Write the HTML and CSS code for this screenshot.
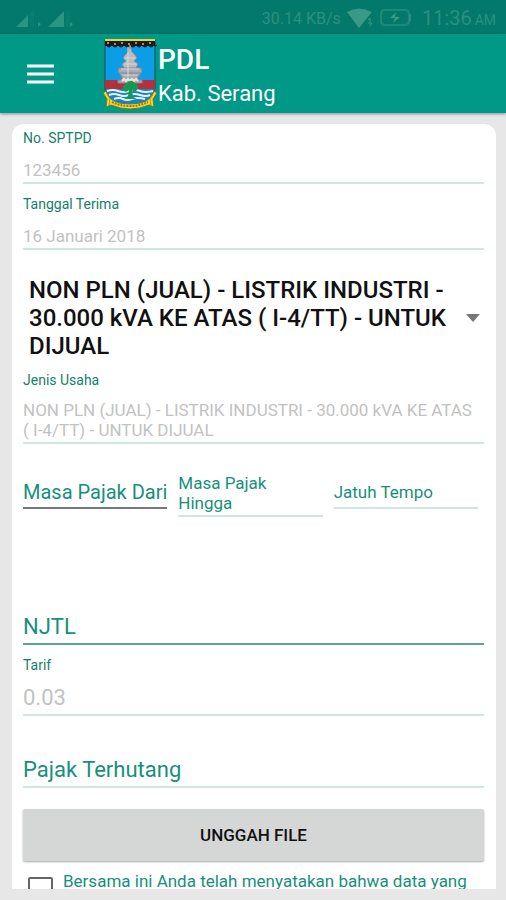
FILE: index.html
```html
<!DOCTYPE html>
<html lang="id">
  <head>
    <meta charset="UTF-8" />
    <meta name="viewport" content="width=device-width, initial-scale=1.0" />
    <title>PDL Kab. Serang</title>
    <link rel="stylesheet" href="styles.css">
  </head>
  <body>
    <div class="status-bar">
      <svg class="signal" width="62" height="22" viewBox="0 0 62 22" aria-hidden="true">
        <path d="M0 18L12 6V18Z M32 18L48 2V18Z" fill="#2b9583" />
        <path d="M14 4L18 1V18H14Z M50 3L54 0V18H50Z" fill="#067d6e" />
        <path d="M22 13l3 2-3 3z M54 13l3 2-3 3z" fill="#2b9583" />
      </svg>
      <div class="status-right">
        <span>30.14 KB/s</span>
        <svg width="27" height="20" viewBox="0 0 27 20" aria-hidden="true">
          <path d="M0 4Q12 -3 25 4L12 20Z" fill="#389986" />
          <path d="M21 12l2-2v4m-2 1h4l-2 3" fill="none" stroke="#389986" />
        </svg>
        <svg class="battery" width="32" height="18" viewBox="0 0 32 18" aria-hidden="true">
          <path d="M5 1H24Q29 1 29 5V12Q29 16 24 16H5Q1 16 1 12V5Q1 1 5 1Z" fill="none" stroke="#1d8a78" stroke-width="2" />
          <path d="M30 5v7" stroke="#268f7d" stroke-width="2" />
          <path d="M16 3L10 9H15L13 14L20 8H15Z" fill="#389986" />
        </svg>
        <span class="clock">11:36 <small>AM</small></span>
      </div>
    </div>

    <header class="app-bar">
      <button type="button" class="menu-button" aria-label="Menu">
        <svg width="27" height="20" viewBox="0 0 27 20">
          <path d="M0 2H27M0 10H27M0 18H27" stroke="#fff" stroke-width="3" />
        </svg>
      </button>
      <svg class="logo" width="56" height="72" viewBox="0 0 56 72" aria-hidden="true">
        <path d="M3 2H53V50Q53 67 28 67Q3 67 3 50Z" fill="#0b9de5" stroke="#254b50" />
        <path d="M3 42H53V51H3Z" fill="#b62f3c" />
        <path d="M4 51H52Q51 66 28 66Q5 66 4 51Z" fill="#1681cf" />
        <path d="M5 53q6-2 11 0t11 0 11 0 13 0M7 57q5-2 10 0t10 0 11 0 10 0M12 61q5-2 9 0t9 0 13 0" fill="none" stroke="#e5f6fa" stroke-width="2" />
        <path d="M3 2H53V8H3Z" fill="#171b19" />
        <path d="M3 2H53" stroke="#ead834" stroke-width="2" />
        <path d="M4 7q3 4 6 0 3 4 6 0 3 4 6 0 3 4 6 0 3 4 6 0 3 4 6 0 3 4 6 0 3 4 6 0 2 2 3 0" fill="#171b19" stroke="#171b19" />
        <path d="M5 5h2m5 1h2m5-1h2m5 1h2m5-1h2m5 1h2m5-1h2" stroke="#eb723f" stroke-width="2" />
        <path d="M28 7L30 14L33 17L35 20L32 23L36 26L34 30L39 34L37 38H19L17 34L22 30L20 26L24 23L21 20L23 17L26 14Z" fill="#b9bbc0" stroke="#8b9098" />
        <path d="M17 30q-2 4 0 5h22q2-1 0-5H17z M20 36h16v6h4v3H16v-3h4z" fill="#a8abb2" stroke="#858a92" />
        <path d="M23 20h10M22 26h12M19 31h18M20 37h16" stroke="#d5d6d9" />
        <path d="M26 9v30" stroke="#d9dadd" />
        <path d="M20 43l2-2 2 2 2-2 2 2 2-2 2 2 2-2 2 2" fill="none" stroke="#eee2db" stroke-width="2" />
        <path d="M22 53q-3-5 2-7 4-6 9-1 5 2 2 7-3 3-5 0l1 7 4 2H23l3-3 1-6q-3 3-5 1z" fill="#16984f" />
        <path d="M4 53Q7 66 28 66T52 53L55 55L51 61L52 69L47 67Q38 71 28 71T9 67L4 69L5 61L1 55Z" fill="#f1d936" stroke="#78771e" />
        <path d="M10 64q8 4 18 4t18-4" fill="none" stroke="#8a8129" stroke-width="2" stroke-dasharray="2 1" />
        <path d="M5 56l3 5-1 6M51 56l-3 5 1 6" fill="none" stroke="#a79825" />
      </svg>
      <div class="app-title">
        <h1>PDL</h1>
        <p>Kab. Serang</p>
      </div>
    </header>

    <main class="page">
      <form class="card">
        <div class="field">
          <label for="no-sptpd">No. SPTPD</label>
          <input type="text" id="no-sptpd" placeholder="123456" />
        </div>
        <div class="field">
          <label for="tanggal-terima">Tanggal Terima</label>
          <input type="text" id="tanggal-terima" placeholder="16 Januari 2018" />
        </div>

        <div class="select-wrap">
          <select aria-label="Pilih jenis usaha">
            <option>NON PLN (JUAL) - LISTRIK INDUSTRI - 30.000 kVA KE ATAS ( I-4/TT) - UNTUK DIJUAL</option>
          </select>
          <svg class="arrow" width="14" height="8" viewBox="0 0 14 8" aria-hidden="true">
            <path d="M0 0H14L7 8Z" fill="#777" />
          </svg>
        </div>

        <div class="field">
          <label for="jenis-usaha">Jenis Usaha</label>
          <textarea id="jenis-usaha" rows="2" placeholder="NON PLN (JUAL) - LISTRIK INDUSTRI - 30.000 kVA KE ATAS (&nbsp;I-4/TT) - UNTUK DIJUAL"></textarea>
        </div>

        <div class="dates">
          <input type="text" class="date-from" aria-label="Masa Pajak Dari" placeholder="Masa Pajak Dari" />
          <textarea rows="2" aria-label="Masa Pajak Hingga" placeholder="Masa Pajak Hingga"></textarea>
          <input type="text" aria-label="Jatuh Tempo" placeholder="Jatuh Tempo" />
        </div>

        <input type="text" class="large njtl" aria-label="NJTL" placeholder="NJTL" />
        <div class="field">
          <label for="tarif">Tarif</label>
          <input type="text" class="large tarif" id="tarif" placeholder="0.03" />
        </div>
        <input type="text" class="large pajak" aria-label="Pajak Terhutang" placeholder="Pajak Terhutang" />

        <button type="button" class="upload">UNGGAH FILE</button>

        <div class="agree">
          <input type="checkbox" id="agree" />
          <label for="agree">Bersama ini Anda telah menyatakan bahwa data yang</label>
        </div>
      </form>
    </main>
  </body>
</html>
```

FILE: styles.css
```css
* {
  box-sizing: border-box;
}
body {
  display: flex;
  flex-direction: column;
  height: 100vh;
  margin: 0;
  overflow: hidden;
  background: #e7e7e7;
  font-family: Roboto, "Liberation Sans", sans-serif;
}
h1,
p {
  margin: 0;
}
button,
input,
select,
textarea {
  font-family: inherit;
}

/* top bars */
.status-bar {
  display: flex;
  flex: none;
  align-items: center;
  justify-content: space-between;
  height: 34px;
  padding: 2px 10px 0 16px;
  background: #03796b;
  color: #2b907f;
  font-size: 16px;
}
.status-right {
  display: flex;
  align-items: center;
  gap: 6px;
}
.signal {
  margin-top: 4px;
}
.clock {
  margin-left: 4px;
  font-size: 20px;
}
.clock small {
  margin-left: -2px;
  font-size: 14px;
}
.app-bar {
  display: flex;
  flex: none;
  align-items: center;
  height: 79px;
  padding-left: 27px;
  background: #009886;
  color: #fff;
  box-shadow: 0 1px 3px rgba(0, 0, 0, 0.4);
}
.menu-button {
  display: flex;
  padding: 0;
  border: none;
  background: none;
  cursor: pointer;
}
.logo {
  margin-left: 48px;
}
.app-title {
  padding-top: 6px;
}
.app-title h1 {
  font-size: 28px;
  font-weight: 500;
  line-height: 34px;
}
.app-title p {
  font-size: 22px;
  line-height: 34px;
}

/* form */
.page {
  flex: 1;
  min-height: 0;
  padding: 11px 10px 11px 12px;
}
.card {
  height: 100%;
  padding: 4px 12px 0 11px;
  overflow: hidden;
  background: #fff;
  border-radius: 12px 12px 0 0;
}
.field {
  margin-bottom: 10px;
}
.field label {
  display: block;
  margin-bottom: 10px;
  color: #16806a;
  font-size: 14px;
  line-height: 20px;
}
.card input[type="text"],
.card textarea {
  display: block;
  width: 100%;
  padding: 0;
  border: none;
  border-bottom: 2px solid #d0e6e0;
  border-radius: 0;
  outline: none;
  background: none;
  color: #333;
  font-size: 17px;
}
.card input[type="text"] {
  height: 26px;
}
.card textarea {
  padding-bottom: 2px;
  overflow: hidden;
  line-height: 20px;
  resize: none;
}
.card ::placeholder {
  color: #c2c2c2;
  opacity: 1;
}
.select-wrap {
  display: flex;
  align-items: center;
  margin: 26px 4px 10px 6px;
}
.select-wrap select {
  flex: 1;
  min-width: 0;
  padding: 0;
  border: none;
  outline: none;
  appearance: none;
  background: none;
  color: #111;
  font-size: 24px;
  font-weight: 500;
  line-height: 28px;
  white-space: normal;
}
.arrow {
  flex: none;
}
.dates {
  display: grid;
  grid-template-columns: repeat(3, 1fr);
  align-items: center;
  gap: 11px;
  margin: 29px 6px 0 0;
}
.card .dates input {
  height: 28px;
  padding-bottom: 4px;
}
.card .dates .date-from {
  border-color: #777;
  font-size: 20px;
}
.dates ::placeholder,
.njtl::placeholder,
.pajak::placeholder {
  color: #16907a;
}
.card input.large {
  height: 31px;
  padding-bottom: 4px;
  font-size: 22px;
}
.card input.njtl {
  margin: 97px 0 10px;
  border-color: #5fa394;
}
.card input.pajak {
  margin-top: 41px;
}
.upload {
  display: block;
  width: 100%;
  height: 52px;
  margin-top: 21px;
  border: none;
  border-radius: 2px;
  background: #d5d7d6;
  color: #111;
  font-size: 17px;
  font-weight: 500;
  box-shadow: 0 1px 2px rgba(0, 0, 0, 0.35);
  cursor: pointer;
}
.agree {
  display: flex;
  gap: 10px;
  margin: 10px 0 0 5px;
}
.agree input {
  flex: none;
  width: 25px;
  height: 25px;
  margin: 6px 0 0;
  border: 2px solid #666;
  border-radius: 2px;
  appearance: none;
}
.agree input:checked {
  background: #009886;
}
.agree label {
  color: #16907a;
  font-size: 17px;
  line-height: 20px;
}
```
